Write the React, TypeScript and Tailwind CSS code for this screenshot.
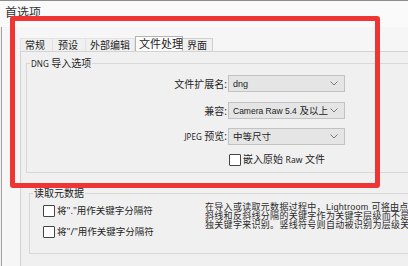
import React from "react";

const tabs = [
  { label: "常规", cls: "w-[33px] pl-[4px] h-[13px] bg-[#f0f0f0] border border-b-0 border-[#e2e2e2] text-[10px] leading-[12px]" },
  { label: "预设", cls: "w-[33px] pl-[5px] h-[13px] bg-[#f0f0f0] border border-b-0 border-l-0 border-[#e2e2e2] text-[10px] leading-[12px]" },
  { label: "外部编辑", cls: "w-[49px] pl-[4px] h-[13px] bg-[#f0f0f0] border border-b-0 border-l-0 border-[#e2e2e2] text-[10px] leading-[12px]" },
  { label: "文件处理", cls: "w-[48px] pl-[3px] h-[15px] bg-[#fbfbfb] border border-b-0 border-[#b4b4b4] text-[11px] leading-[14px]" },
  { label: "界面", cls: "w-[30px] pl-[4px] h-[13px] bg-[#f0f0f0] border border-b-0 border-l-0 border-[#cfcfcf] text-[10px] leading-[12px]" },
];

const Chevron = () => (
  <svg width="8" height="5" viewBox="0 0 8 5" className="shrink-0">
    <path d="M0.5 0.5 L4 4 L7.5 0.5" fill="none" stroke="#7a7a7a" strokeWidth="1" />
  </svg>
);

const Select = ({ value }: { value: React.ReactNode }) => (
  <div className="ml-[1px] w-[117px] h-[17px] flex items-center justify-between pl-[4px] pr-[6px] bg-[#e5e5e5] border border-[#c2c2c2] text-[9.5px] leading-[12px] text-[#222] font-['Liberation_Sans','Noto_Sans_CJK_SC',sans-serif]">
    <span className="whitespace-nowrap">{value}</span>
    <Chevron />
  </div>
);

const Row = ({ label, value, mt }: { label: React.ReactNode; value: React.ReactNode; mt: string }) => (
  <div className={`flex items-center ${mt}`}>
    <div className="w-[200px] text-right text-[10px] leading-[12px] whitespace-nowrap">{label}</div>
    <Select value={value} />
  </div>
);

const Box = () => <div className="w-[12px] h-[12px] bg-white border border-[#444] rounded-[1px] shrink-0" />;

export default function App() {
  return (
    <div className="relative w-[408px] h-[266px] overflow-hidden bg-[#f0f0f0] text-[#1e1e1e] font-['Noto_Sans','Noto_Sans_CJK_SC',sans-serif]">
      <div className="h-[27px] bg-[#fafafa] border-t border-[#8e8e8e] pl-[5px] pt-[5px] text-[12px] leading-[14px] text-[#333]">
        首选项
      </div>

      <div className="ml-[1px] h-[239px] border-l border-[#a3a3a3] bg-[#f6f6f6] pl-[18px] pt-[9px]">
        <div className="flex items-end h-[15px]">
          {tabs.map((t) => (
            <div key={t.label} className={`${t.cls} whitespace-nowrap`}>
              {t.label}
            </div>
          ))}
        </div>

        <div className="w-[420px] h-[230px] border border-[#d3d3d3] bg-[#f0f0f0]">
          <fieldset className="ml-[5px] mt-[5px] w-[400px] h-[116px] border border-[#d8d8d8]">
            <legend className="ml-[3px] px-[1px] text-[10px] leading-[12px]">
              <span className="text-[8px]">DNG</span> 导入选项
            </legend>
            <Row mt="mt-[5px]" label="文件扩展名:" value={<span className="text-[9px]">dng</span>} />
            <Row
              mt="mt-[10px]"
              label="兼容:"
              value={
                <>
                  <span className="text-[8.5px]">Camera Raw 5.4</span> 及以上
                </>
              }
            />
            <Row
              mt="mt-[9px]"
              label={
                <>
                  <span className="text-[8px]">JPEG</span> 预览:
                </>
              }
              value="中等尺寸"
            />
            <div className="flex items-center mt-[8px] pl-[202px]">
              <Box />
              <span className="ml-[2px] text-[10px] leading-[12px] whitespace-nowrap">
                嵌入原始 <span className="text-[8.5px]">Raw</span> 文件
              </span>
            </div>
          </fieldset>

          <fieldset className="ml-[8px] mt-[14px] w-[400px] h-[67px] border border-[#d8d8d8]">
            <legend className="ml-[3px] px-[1px] text-[10px] leading-[12px]">读取元数据</legend>
            <div className="flex">
              <div className="w-[175px] pl-[13px] pt-[6px] flex flex-col gap-[9px]">
                <div className="flex items-center">
                  <Box />
                  <span className="ml-[2px] text-[9.5px] leading-[12px] whitespace-nowrap">将"."用作关键字分隔符</span>
                </div>
                <div className="flex items-center">
                  <Box />
                  <span className="ml-[2px] text-[9.5px] leading-[12px] whitespace-nowrap">将"/"用作关键字分隔符</span>
                </div>
              </div>
              <div className="pt-[4px] text-[9px] leading-[9px] tracking-[0.3px] text-[#2a2a2a] whitespace-nowrap font-['Liberation_Sans','Noto_Sans_CJK_SC',sans-serif]">
                <div>在导入或读取元数据过程中，Lightroom 可将由点</div>
                <div>斜线和反斜线分隔的关键字作为关键字层级而不是</div>
                <div>独关键字来识别。竖线符号则自动被识别为层级关</div>
              </div>
            </div>
          </fieldset>
        </div>
      </div>

      <div className="absolute left-[10px] top-[16px] w-[370px] h-[172px] border-[5px] border-[#ef3434] rounded-[3px]" />
    </div>
  );
}
